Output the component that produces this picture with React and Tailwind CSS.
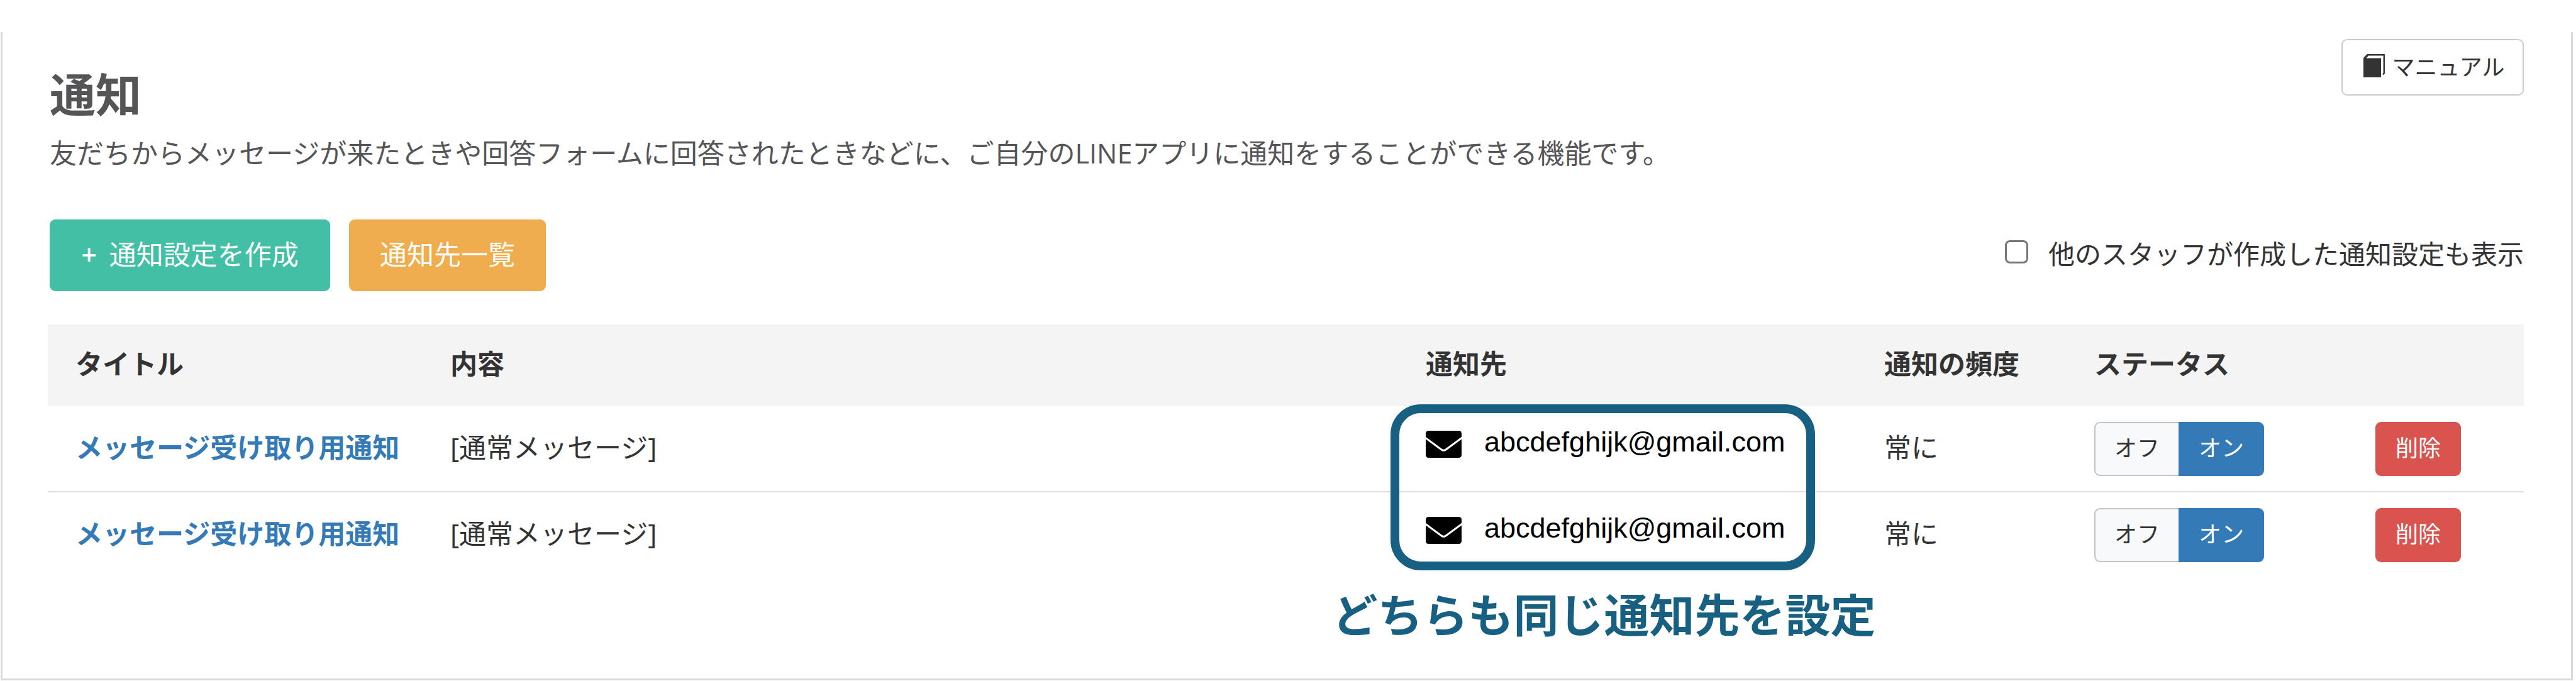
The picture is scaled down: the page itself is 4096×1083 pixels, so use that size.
import React, { useState } from "react";

const initialRows = [
  { id: 1, title: "メッセージ受け取り用通知", content: "[通常メッセージ]", email: "abcdefghijk@gmail.com", frequency: "常に", enabled: true },
  { id: 2, title: "メッセージ受け取り用通知", content: "[通常メッセージ]", email: "abcdefghijk@gmail.com", frequency: "常に", enabled: true },
];

const BookIcon = () => (
  <svg viewBox="0 0 34 37" className="w-[34px] h-[37px] mb-1.5 shrink-0" aria-hidden="true">
    <path d="M0 6.5h28V37H0z" fill="#333" />
    <path d="M1.2 6.5L6.5 1.2H32.8V30.5L31 32.5" fill="none" stroke="#333" strokeWidth="2.4" strokeLinejoin="round" />
    <path d="M0 7L6 0.5L8 2.5L4 7z" fill="#333" />
  </svg>
);

const MailIcon = () => (
  <svg viewBox="0 0 57 43" className="w-[57px] h-[43px] shrink-0" aria-hidden="true">
    <rect width="57" height="43" rx="4.5" fill="#000" />
    <path d="M-1 11L25 30Q28.5 32.5 32 30L58 11" fill="none" stroke="#fff" strokeWidth="3" />
  </svg>
);

const StatusToggle = ({ enabled, onChange }) => (
  <div className="flex w-[270px] h-[86px] text-[36px] leading-[44px]">
    <button
      type="button"
      aria-pressed={!enabled}
      onClick={() => onChange(false)}
      className={
        enabled
          ? "w-[134px] pb-0.5 rounded-l-[9px] border-2 border-r-0 border-[#c4c4c4] bg-[#f8f9fb] text-[#333]"
          : "w-[134px] pb-0.5 rounded-l-[9px] bg-[#337ab7] text-white"
      }
    >
      オフ
    </button>
    <button
      type="button"
      aria-pressed={enabled}
      onClick={() => onChange(true)}
      className={
        enabled
          ? "flex-1 pb-0.5 rounded-r-[9px] bg-[#337ab7] text-white"
          : "flex-1 pb-0.5 rounded-r-[9px] border-2 border-l-0 border-[#c4c4c4] bg-[#f8f9fb] text-[#333]"
      }
    >
      オン
    </button>
  </div>
);

const Callout = () => (
  <div className="absolute -left-2.5 -top-[3px] z-10 w-[675px] h-[264px] rounded-[48px] border-[14px] border-[#176082] pointer-events-none">
    <p className="absolute top-full left-1/2 -translate-x-1/2 mt-12 ml-0.5 text-[72px] leading-[72px] font-bold whitespace-nowrap text-[#176082]">
      どちらも同じ通知先を設定
    </p>
  </div>
);

const App = () => {
  const [rows, setRows] = useState(initialRows);
  const [showOthers, setShowOthers] = useState(false);

  const setEnabled = (id, enabled) => {
    setRows(rows.map((row) => (row.id === id ? { ...row, enabled } : row)));
  };

  const removeRow = (id) => {
    setRows(rows.filter((row) => row.id !== id));
  };

  return (
    <div className="min-h-screen bg-white pt-[51px] pl-px pr-[5px] pb-px flex flex-col font-['Open_Sans','Noto_Sans_CJK_JP',sans-serif] text-[43px] leading-[60px] text-[#333]">
      <main className="flex-1 border-3 border-t-0 border-[#dadada] pl-[72px] pr-[75px]">
        <header className="flex justify-between items-start pt-[11px] pl-[3px] text-[#555557]">
          <div className="pt-[51px]">
            <h1 className="text-[73px] leading-[73px] font-bold">通知</h1>
            <p className="mt-7">
              友だちからメッセージが来たときや回答フォームに回答されたときなどに、ご自分のLINEアプリに通知をすることができる機能です。
            </p>
          </div>
          <a
            href="#manual"
            className="flex items-center justify-center gap-3 w-[290px] h-[90px] pl-1 rounded-[9px] border-2 border-[#ccc] text-[36px] leading-[44px] text-[#333]"
          >
            <BookIcon />
            マニュアル
          </a>
        </header>

        <div className="flex justify-between items-center mt-[75px] pl-[3px]">
          <div className="flex gap-[30px] text-white">
            <button type="button" className="flex items-center justify-center gap-5 w-[446px] h-[114px] pb-0.5 rounded-[9px] bg-[#43bfa5]">
              <span className="font-semibold">+</span>
              通知設定を作成
            </button>
            <button type="button" className="w-[313px] h-[114px] pb-0.5 rounded-[9px] bg-[#f0ad4e]">
              通知先一覧
            </button>
          </div>
          <label className="flex items-center gap-8 pb-1 text-[42px]">
            <input
              type="checkbox"
              checked={showOthers}
              onChange={(e) => setShowOthers(e.target.checked)}
              className="appearance-none w-[37px] h-[37px] mb-2 rounded-[8px] border-3 border-[#767676] bg-white checked:bg-[#337ab7]"
            />
            他のスタッフが作成した通知設定も表示
          </label>
        </div>

        <table className="w-full mt-[53px] table-fixed border-collapse text-left">
          <thead>
            <tr className="h-[130px] bg-[#f4f4f4]">
              <th className="w-[594px] pl-11 pb-1 font-bold">タイトル</th>
              <th className="px-[46px] pb-1 font-bold">内容</th>
              <th className="w-[729px] px-[46px] pb-1 font-bold">通知先</th>
              <th className="w-[334px] pl-[46px] pb-1 font-bold">通知の頻度</th>
              <th className="w-[447px] px-[46px] pb-1 font-bold">ステータス</th>
              <th className="w-[282px]"></th>
            </tr>
          </thead>
          <tbody>
            {rows.map((row, index) => (
              <tr key={row.id} className="h-[136px] border-b-2 border-[#ddd] last:border-b-0">
                <td className="pl-11 pb-1 whitespace-nowrap">
                  <a href="#detail" className="font-bold text-[#337ab7]">{row.title}</a>
                </td>
                <td className="px-[46px] pb-1">{row.content}</td>
                <td className="relative px-[46px] pb-[22px]">
                  {index === 0 && <Callout />}
                  <div className="flex items-end gap-9 font-['Liberation_Sans',Arial,sans-serif] text-[45px] leading-[50px] text-black">
                    <MailIcon />
                    {row.email}
                  </div>
                </td>
                <td className="px-[46px] pb-1">{row.frequency}</td>
                <td className="px-[46px]">
                  <StatusToggle enabled={row.enabled} onChange={(enabled) => setEnabled(row.id, enabled)} />
                </td>
                <td className="px-[46px]">
                  <button
                    type="button"
                    onClick={() => removeRow(row.id)}
                    className="block w-[136px] h-[86px] pb-0.5 rounded-[9px] bg-[#d9534f] text-[36px] leading-[44px] text-white"
                  >
                    削除
                  </button>
                </td>
              </tr>
            ))}
          </tbody>
        </table>
      </main>
    </div>
  );
};

export default App;
